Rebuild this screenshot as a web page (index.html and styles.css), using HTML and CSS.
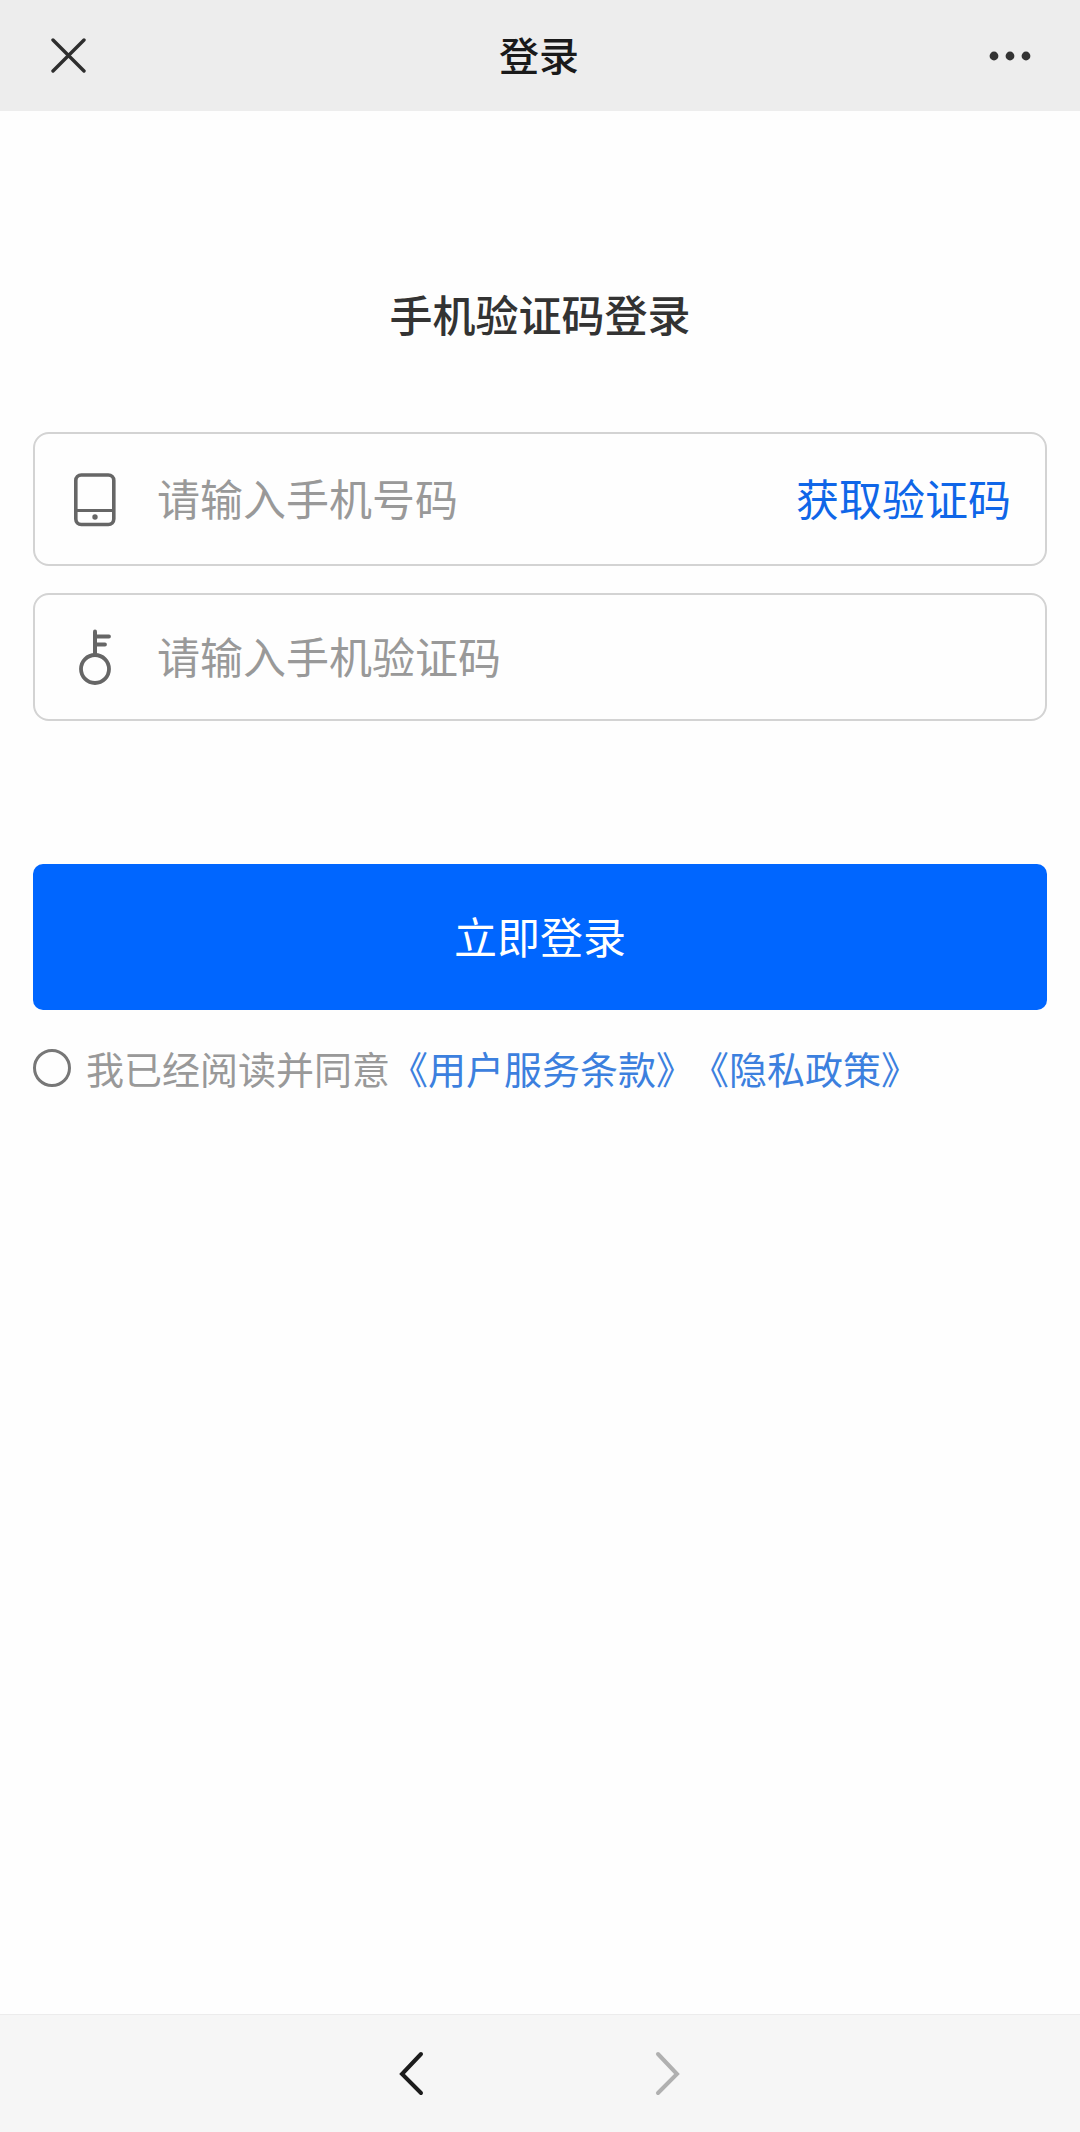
FILE: index.html
```html
<!DOCTYPE html>
<html lang="zh-CN">
<head>
    <meta charset="UTF-8">
    <meta name="viewport" content="width=device-width, initial-scale=1.0">
    <title>登录</title>
    <link rel="stylesheet" href="styles.css">
</head>
<body>
    <header class="top-bar">
        <button type="button" class="icon-btn" aria-label="关闭">
            <svg width="36" height="36" viewBox="0 0 36 36" fill="none" stroke="#2e2e2e" stroke-width="3.4" stroke-linecap="round">
                <path d="M3 2l31 31M34 2L3 33"/>
            </svg>
        </button>
        <div class="top-title">登录</div>
        <button type="button" class="icon-btn" aria-label="更多">
            <svg width="44" height="12" viewBox="0 0 44 12" fill="#333">
                <circle cx="6" cy="6" r="4.4"/>
                <circle cx="22" cy="6" r="4.4"/>
                <circle cx="38" cy="6" r="4.4"/>
            </svg>
        </button>
    </header>

    <main class="container">
        <h1>手机验证码登录</h1>

        <form id="loginForm">
            <div class="form-group phone-group">
                <label for="phone" aria-label="手机号码">
                    <svg width="56" height="56" viewBox="0 0 56 56" fill="none" stroke="#666" stroke-width="3.6">
                        <rect x="8.800" y="4" width="38" height="49.500" rx="5.500"/>
                        <path d="M9 39.500h38" stroke-width="3"/>
                        <circle cx="28" cy="46" r="2.7" fill="#666" stroke="none"/>
                    </svg>
                </label>
                <input type="tel" id="phone" name="phone" placeholder="请输入手机号码">
                <button type="button" class="code-btn">获取验证码</button>
            </div>

            <div class="form-group">
                <label for="code" aria-label="手机验证码">
                    <svg width="56" height="56" viewBox="0 0 56 56" fill="none" stroke="#666" stroke-linecap="round">
                        <circle cx="28" cy="40" r="14" stroke-width="3.8"/>
                        <path d="M28 26V2.500" stroke-width="4"/>
                        <path d="M29 7.500h13M29 15.500h9" stroke-width="3.8"/>
                    </svg>
                </label>
                <input type="text" id="code" name="code" placeholder="请输入手机验证码">
            </div>

            <button type="submit" class="btn">立即登录</button>

            <div class="agreement">
                <input type="checkbox" id="agree" name="agree">
                <p><label for="agree">我已经阅读并同意</label><a href="#terms">《用户服务条款》</a><a href="#privacy">《隐私政策》</a></p>
            </div>
        </form>
    </main>

    <footer class="bottom-bar">
        <button type="button" class="icon-btn" aria-label="后退">
            <svg width="28" height="46" viewBox="0 0 28 46" fill="none" stroke="#1c1c1c" stroke-width="4" stroke-linecap="round">
                <path d="M23 3L4 23l19 19"/>
            </svg>
        </button>
        <button type="button" class="icon-btn" aria-label="前进" disabled>
            <svg width="28" height="46" viewBox="0 0 28 46" fill="none" stroke="#b0b0b0" stroke-width="4" stroke-linecap="round">
                <path d="M4 3l19 20L4 42"/>
            </svg>
        </button>
    </footer>
</body>
</html>
```
FILE: styles.css
```css
* {
    box-sizing: border-box;
}

body {
    font-family: "Noto Sans CJK SC", sans-serif;
    background: #fefefe;
    color: #333;
    min-height: 100vh;
    display: flex;
    flex-direction: column;
    margin: 0;
}

button,
input {
    font: inherit;
}

button {
    border: none;
    background: none;
    padding: 0;
    cursor: pointer;
}

svg {
    display: block;
}

.top-bar {
    display: flex;
    align-items: center;
    justify-content: space-between;
    height: 111px;
    padding: 0 40px 0 38px;
    background: #ededed;
}

.top-title {
    padding-bottom: 4px;
    font-size: 40px;
    font-weight: 500;
    color: #1a1a1a;
}

.icon-btn {
    display: flex;
    align-items: center;
    justify-content: center;
    width: 60px;
    height: 60px;
}

.container {
    flex: 1;
    padding: 170px 33px 0;
}

h1 {
    margin: 0 0 87px;
    font-size: 43px;
    font-weight: 500;
    line-height: 64px;
    text-align: center;
}

.form-group {
    display: flex;
    align-items: center;
    height: 128px;
    padding: 0 34px 0 32px;
    border: 2px solid #d3d3d3;
    border-radius: 16px;
    font-size: 43px;
}

.phone-group {
    height: 134px;
    margin-bottom: 27px;
}

.form-group input {
    flex: 1;
    min-width: 0;
    height: 68px;
    margin-left: 34px;
    padding: 0 0 4px;
    border: none;
    outline: none;
    background: transparent;
    color: #333;
}

.form-group input::placeholder {
    color: #999;
}

.code-btn {
    padding-bottom: 4px;
    color: #0f66e8;
}

.btn {
    display: block;
    width: 100%;
    height: 146px;
    margin-top: 143px;
    padding-bottom: 4px;
    border-radius: 10px;
    background: #06f;
    color: white;
    font-size: 43px;
}

.agreement {
    display: flex;
    align-items: center;
    gap: 15px;
    margin-top: 28px;
    font-size: 38px;
    line-height: 60px;
    color: #999;
}

.agreement input {
    appearance: none;
    flex: none;
    width: 38px;
    height: 38px;
    margin: 0;
    border: 3px solid #777;
    border-radius: 50%;
}

.agreement input:checked {
    background: #06f;
}

.agreement p {
    margin: 0;
}

.agreement a {
    color: #3c80de;
    text-decoration: none;
}

.agreement a + a {
    margin-left: 16px;
}

.bottom-bar {
    display: flex;
    align-items: center;
    justify-content: center;
    gap: 196px;
    height: 118px;
    border-top: 1px solid #ececec;
    background: #f6f6f6;
}
```
